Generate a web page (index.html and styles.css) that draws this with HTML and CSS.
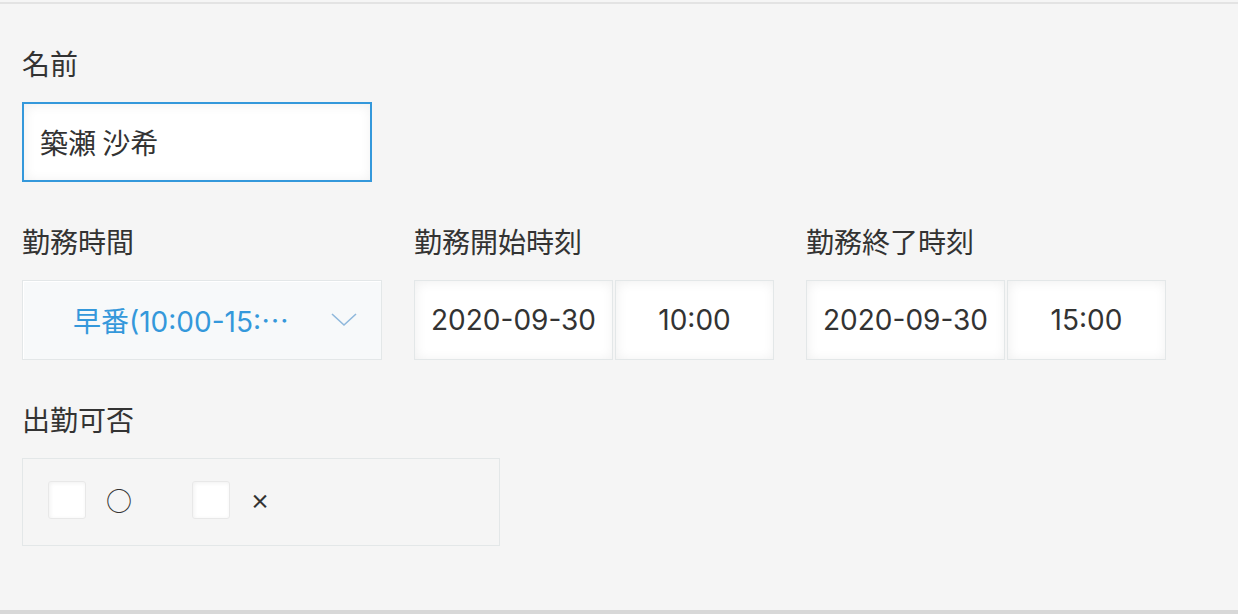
FILE: index.html
```html
<!DOCTYPE html>
<html lang="ja">
<head>
    <meta charset="UTF-8">
    <meta name="viewport" content="width=device-width, initial-scale=1.0">
    <title>勤務登録</title>
    <link rel="stylesheet" href="styles.css">
</head>
<body>

    <div class="panel">
        <div class="row">
            <div class="field">
                <div class="label">名前</div>
                <input type="text" class="name-input" value="築瀬 沙希">
            </div>
        </div>

        <div class="row">
            <div class="field">
                <div class="label">勤務時間</div>
                <div class="select">
                    <span class="select-text">早番(10:00-15:<span class="dots">⋯</span></span>
                    <svg class="chevron" width="28" height="16" viewBox="0 0 28 16">
                        <polyline points="2,2 14,13 26,2" fill="none" stroke="#8fb8dc" stroke-width="1.6"/>
                    </svg>
                </div>
            </div>
            <div class="field">
                <div class="label">勤務開始時刻</div>
                <div class="datetime">
                    <input type="text" class="date-input" value="2020-09-30">
                    <input type="text" class="time-input" value="10:00">
                </div>
            </div>
            <div class="field">
                <div class="label">勤務終了時刻</div>
                <div class="datetime">
                    <input type="text" class="date-input" value="2020-09-30">
                    <input type="text" class="time-input" value="15:00">
                </div>
            </div>
        </div>

        <div class="row">
            <div class="field">
                <div class="label">出勤可否</div>
                <div class="check-group">
                    <label class="check-item"><span class="check-box"></span><span class="check-text">○</span></label>
                    <label class="check-item"><span class="check-box"></span><span class="check-text cross">×</span></label>
                </div>
            </div>
        </div>
    </div>

</body>
</html>
```

FILE: styles.css
```css
body {
    margin: 0;
    background-color: #f5f5f5;
    color: #333;
    font-family: "Noto Sans CJK JP", sans-serif;
    overflow: hidden;
}

.panel {
    box-sizing: border-box;
    height: 612px;
    margin-top: 2px;
    padding: 38px 22px 0;
    border-top: 2px solid #e3e3e3;
    border-bottom: 4px solid #d8d8d8;
}

.row {
    display: flex;
    gap: 32px;
}

.row + .row {
    margin-top: 38px;
}

.field {
    width: 360px;
}

.label {
    font-size: 28px;
    line-height: 42px;
    margin-bottom: 18px;
}

input {
    box-sizing: border-box;
    margin: 0;
    height: 80px;
    font-family: Inter, "Noto Sans CJK JP", sans-serif;
    font-size: 28px;
    color: #333;
    background: #fff;
    border: 1px solid #e3e7e8;
    box-shadow: inset 1px 1px 12px #efefef;
    outline: none;
}

.name-input {
    width: 350px;
    padding: 0 16px;
    border: 2px solid #3498db;
    font-family: "Noto Sans CJK JP", sans-serif;
}

.select {
    box-sizing: border-box;
    width: 360px;
    height: 80px;
    display: flex;
    align-items: center;
    padding-left: 50px;
    background: #f7f9fa;
    border: 1px solid #e3e7e8;
    box-shadow: inset 1px 1px 1px #fff;
}

.select-text {
    width: 257px;
    font-family: Inter, "Noto Sans CJK JP", sans-serif;
    font-size: 28px;
    color: #3498db;
    white-space: nowrap;
}

.dots {
    font-family: "Noto Sans CJK JP", sans-serif;
    letter-spacing: -4px;
}

.chevron {
    display: block;
}

.datetime {
    display: flex;
    gap: 2px;
}

.date-input {
    width: 199px;
    text-align: center;
}

.time-input {
    width: 159px;
    text-align: center;
}

.check-group {
    box-sizing: border-box;
    width: 478px;
    height: 88px;
    display: flex;
    align-items: center;
    gap: 60px;
    padding: 0 0 5px 25px;
    border: 1px solid #e3e7e8;
}

.check-item {
    display: flex;
    align-items: center;
    gap: 20px;
}

.check-box {
    box-sizing: border-box;
    width: 38px;
    height: 38px;
    background: #fff;
    border: 1px solid #e8e8e8;
    border-radius: 3px;
    box-shadow: inset 1px 1px 4px #f0f0f0;
}

.check-text {
    font-size: 26px;
}

.cross {
    font-size: 20px;
    font-weight: 700;
    margin-top: 2px;
}
```
